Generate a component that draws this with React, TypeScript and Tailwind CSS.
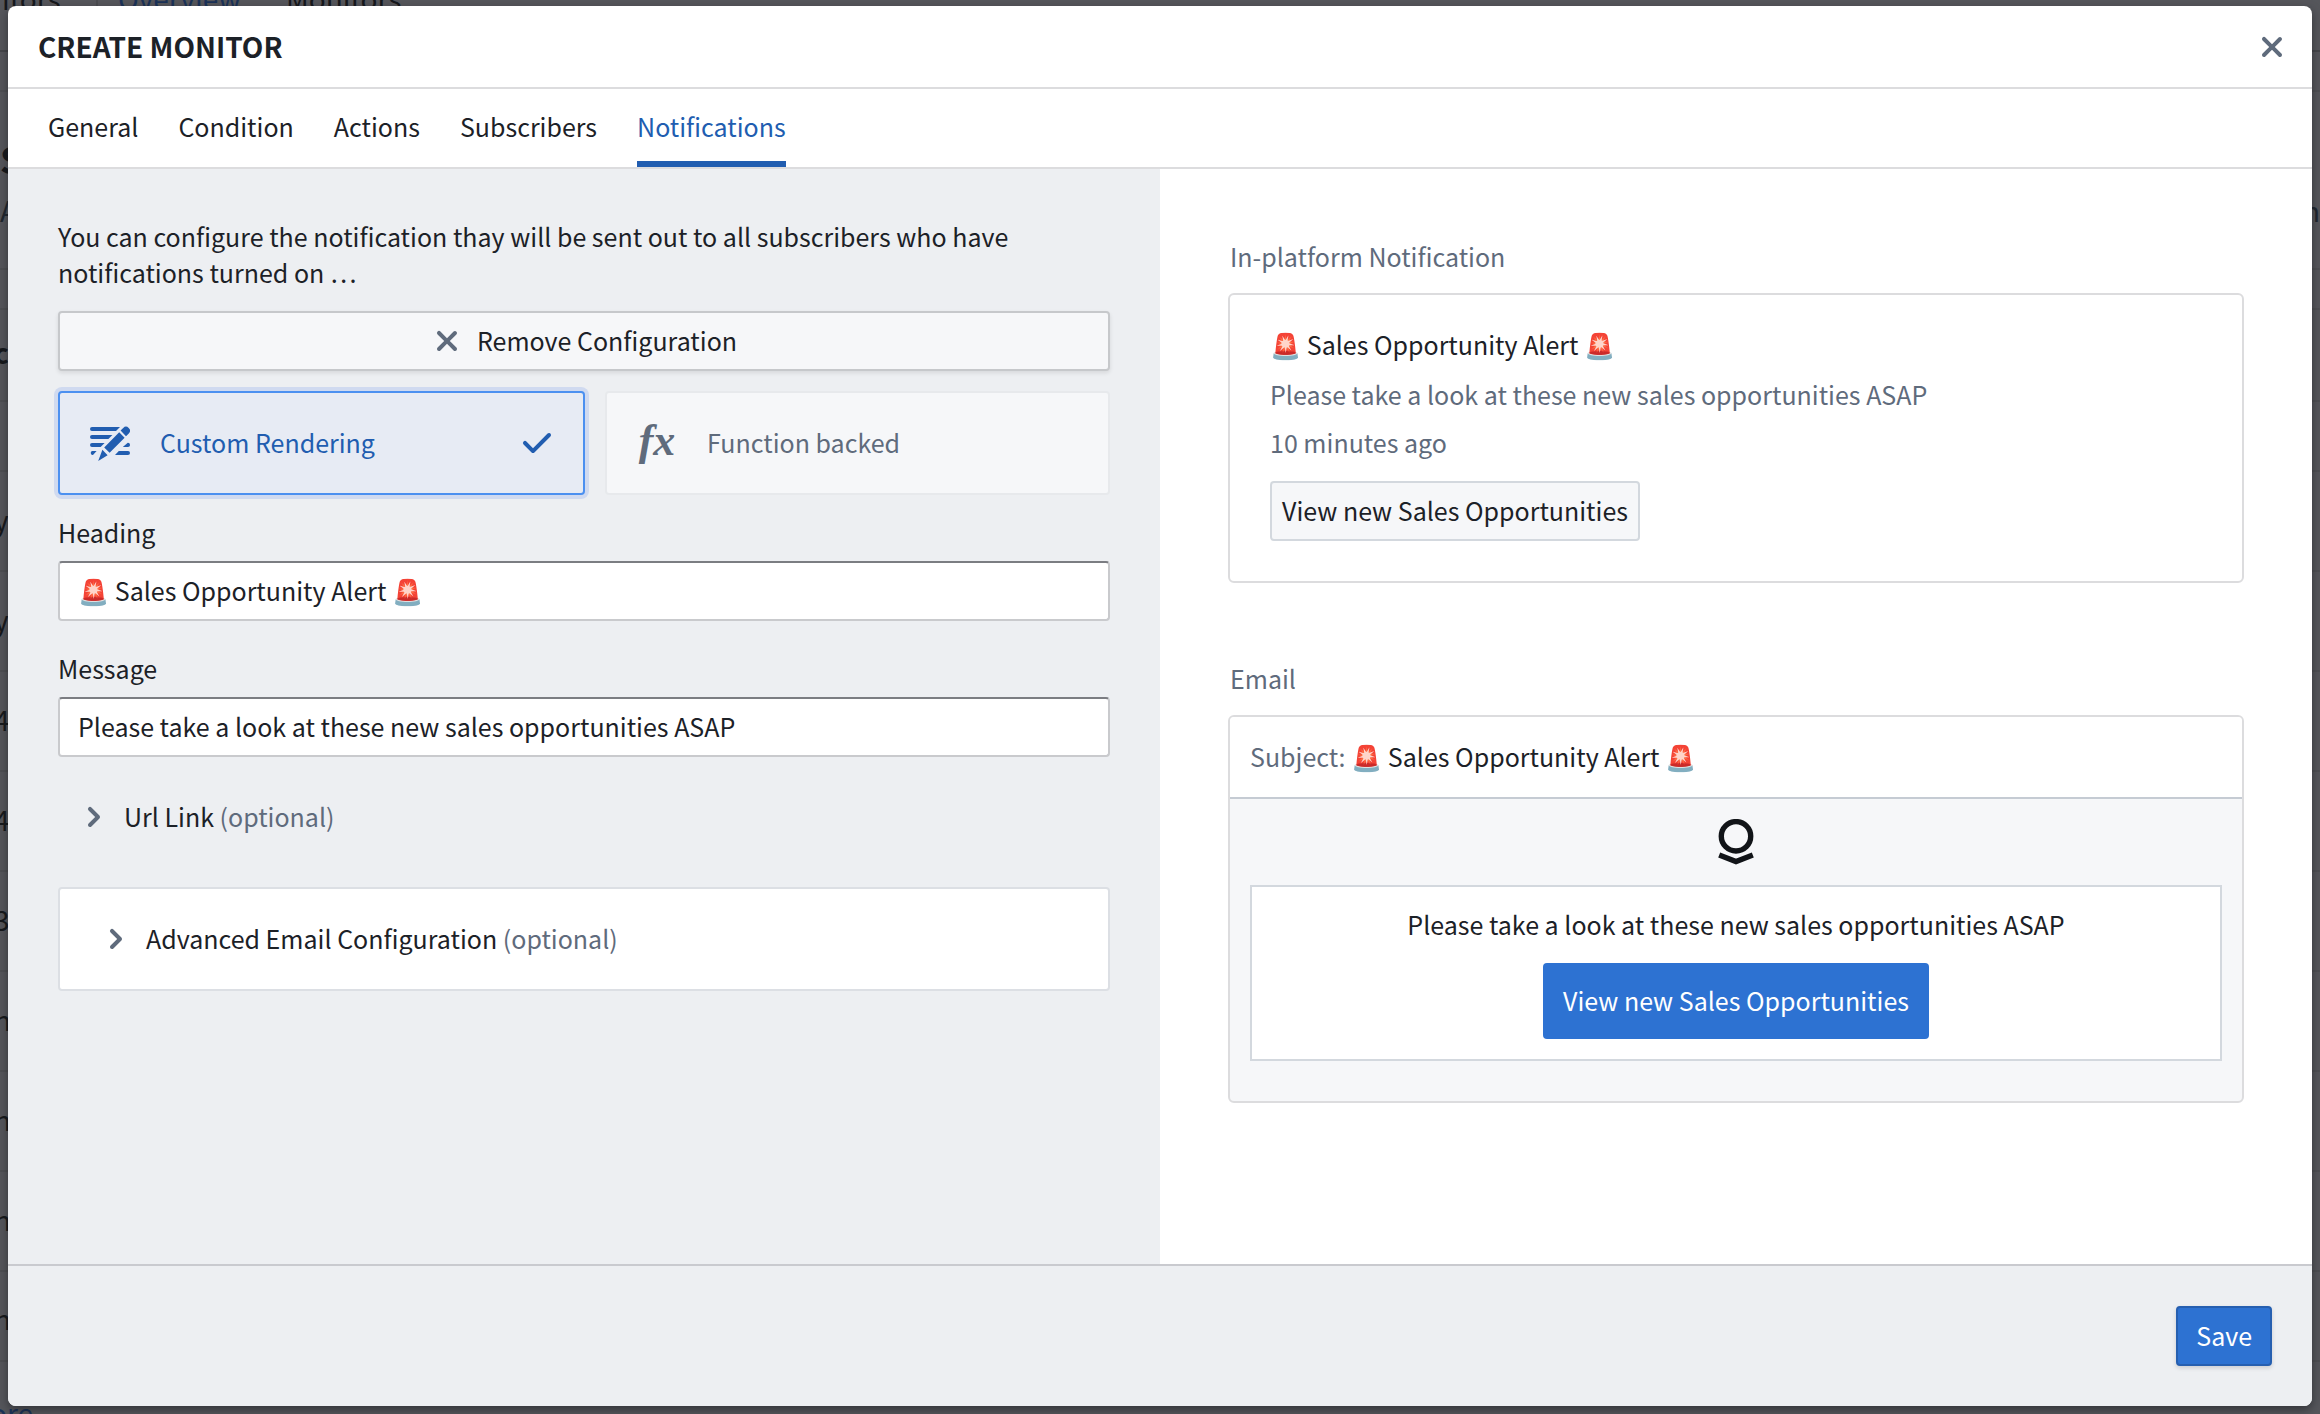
import type { ReactNode } from "react";

type IconProps = { d: string; className: string };

const Icon16 = ({ d, className }: IconProps) => (
  <svg viewBox="0 0 16 16" fill="currentColor" aria-hidden="true" className={className}>
    <path d={d} />
  </svg>
);

const CROSS =
  "M9.41 8l3.29-3.29c.19-.18.3-.43.3-.71a1.003 1.003 0 00-1.71-.71L8 6.59l-3.29-3.3a1.003 1.003 0 00-1.42 1.42L6.59 8 3.3 11.29c-.19.18-.3.43-.3.71a1.003 1.003 0 001.71.71L8 9.41l3.29 3.29c.18.19.43.3.71.3a1.003 1.003 0 00.71-1.71L9.41 8z";
const TICK =
  "M14 3c-.28 0-.53.11-.71.29L6 10.59l-3.29-3.3a1.003 1.003 0 00-1.42 1.42l4 4c.18.18.43.29.71.29s.53-.11.71-.29l8-8A1.003 1.003 0 0014 3z";
const CHEVRON =
  "M10.71 7.29l-4-4a1.003 1.003 0 00-1.42 1.42L8.59 8 5.3 11.29c-.19.18-.3.43-.3.71a1.003 1.003 0 001.71.71l4-4c.18-.18.29-.43.29-.71 0-.28-.11-.53-.29-.71z";

const EditTextIcon = () => (
  <svg viewBox="0 0 20 20" fill="currentColor" aria-hidden="true" className="size-10 shrink-0">
    <path d="M1 2h14l-2 2H1a1 1 0 010-2zM1 6h10.2l-2 2H1a1 1 0 010-2zM1 10h6.3l-2 2H1a1 1 0 010-2zM1 14h2.3l-1.8 2A1.05 1.05 0 011 14zM16.4 12l2.5-2.1A1.05 1.05 0 0119 12zM14.4 14H19a1 1 0 010 2h-6.5z" />
    <path d="M19.4 5.2a1.9 1.9 0 00-2.8-2.7l-1.3 1.3 2.7 2.8zM14.6 4.6l-7.5 7.6 2.7 2.7 7.5-7.5zM6.2 13.4L4.1 19l4.7-2.9z" />
  </svg>
);

const Logo = () => (
  <svg viewBox="0 0 36 46" fill="none" stroke="#111418" aria-hidden="true" className="h-[46px] w-9">
    <circle cx="18" cy="17.3" r="14.7" strokeWidth="5.4" />
    <path d="M1.2 36L18 42.6 34.8 36" strokeWidth="5.4" />
  </svg>
);

const ALERT = "🚨 Sales Opportunity Alert 🚨";
const MESSAGE = "Please take a look at these new sales opportunities ASAP";
const TABS = ["General", "Condition", "Actions", "Subscribers", "Notifications"];

const Field = ({ id, label, value }: { id: string; label: string; value: string }) => (
  <div className="flex flex-col gap-[11px]">
    <label htmlFor={id}>{label}</label>
    <input
      id={id}
      type="text"
      defaultValue={value}
      className="h-[60px] w-full rounded-[4px] border-2 border-[#c9cacd] border-t-[#7b7d82] bg-white px-[18px] pb-0.5"
    />
  </div>
);

const Expander = ({ children, className }: { children: ReactNode; className: string }) => (
  <button type="button" aria-expanded="false" className={className}>
    <Icon16 d={CHEVRON} className="size-8 shrink-0 text-[#5f6b7c]" />
    <span className="pb-0.5">
      {children} <span className="text-[#5f6b7c]">(optional)</span>
    </span>
  </button>
);

const PAGE_ROWS = ["y", "y", "4", "4", "3", "n", "n", "n"];

const PageBehind = () => (
  <div aria-hidden="true" className="absolute inset-0 overflow-hidden bg-[#55565b] text-[28px] text-[#16181c]">
    <div className="flex h-[52px] items-start border-b-2 border-[#45464a]">
      <div className="-mt-5 flex">
        <span className="w-[98px] border-r-2 border-[#4b4c50] pl-0.5">itors</span>
        <span className="w-[188px] pl-5 text-[#1b3258]">Overview</span>
        <span>Monitors</span>
      </div>
    </div>
    <div className="h-10 border-b-2 border-[#4e4f53]" />
    <div className="flex h-[178px] flex-col justify-between border-b-2 border-[#4e4f53] pt-12 pb-10">
      <span className="text-[36px] font-bold">S</span>
      <div className="flex justify-between text-[#20262e]">
        <span>A</span>
        <span>n</span>
      </div>
    </div>
    <div className="h-10 border-b-2 border-[#4e4f53]" />
    <div className="h-[92px] border-b-2 border-[#4e4f53] pt-6 font-bold">
      <span className="-ml-1.5">c</span>
    </div>
    <div className="h-[70px] border-b-2 border-[#4e4f53]" />
    {PAGE_ROWS.map((letter, i) => (
      <div key={i} className="flex h-[100px] items-center border-b-2 border-[#4e4f53] pb-1">
        <span className="-ml-1.5">{letter}</span>
      </div>
    ))}
    <div className="h-[90px] border-b-2 border-[#4e4f53] pt-7">
      <span className="-ml-1.5">n</span>
    </div>
    <div className="pt-8 text-[#1b3258]">
      <span className="-ml-2.5">ore</span>
    </div>
  </div>
);

export default function App() {
  return (
    <div className="relative flex min-h-screen flex-col px-2 pt-1.5 pb-2 font-['Noto_Sans_CJK_SC','Noto_Color_Emoji',sans-serif] text-[25px] leading-9 text-[#1c2127]">
      <PageBehind />
      <div
        role="dialog"
        aria-labelledby="dialog-title"
        className="relative flex grow flex-col overflow-hidden rounded-[8px] bg-white shadow-[0_4px_10px_rgba(17,20,24,0.5)]"
      >
        <header className="flex h-[83px] items-center justify-between border-b-2 border-[#dcdcde] pr-6 pl-[30px]">
          <h2 id="dialog-title" className="pb-0.5 text-[28px] font-bold">
            CREATE MONITOR
          </h2>
          <button type="button" aria-label="Close" className="text-[#5f6b7c]">
            <Icon16 d={CROSS} className="size-8" />
          </button>
        </header>

        <nav role="tablist" className="flex h-20 gap-10 border-b-2 border-[#dcdcde] px-10">
          {TABS.map((tab) => (
            <button
              key={tab}
              type="button"
              role="tab"
              aria-selected={tab === "Notifications"}
              className="border-b-6 border-transparent pt-0.5 aria-selected:border-[#215db0] aria-selected:text-[#215db0]"
            >
              {tab}
            </button>
          ))}
        </nav>

        <div className="grid grow grid-cols-2">
          <section className="flex flex-col bg-[#edeff2] px-[50px] pt-[49px]">
            <p className="max-w-[1000px]">
              You can configure the notification thay will be sent out to all subscribers who have notifications turned
              on …
            </p>
            <button
              type="button"
              className="mt-[21px] flex h-[60px] items-center justify-center gap-3.5 rounded-[4px] border-2 border-[#c6c8cb] bg-[#f6f7f9] shadow-[0_2px_4px_rgba(17,20,24,0.1)]"
            >
              <Icon16 d={CROSS} className="size-8 text-[#5f6b7c]" />
              <span className="pb-0.5">Remove Configuration</span>
            </button>

            <div className="mt-5 grid grid-cols-[527fr_505fr] gap-5">
              <button
                type="button"
                aria-pressed="true"
                className="flex h-[104px] items-center rounded-[4px] border-2 border-[#4c90f0] bg-[#e7ebf4] px-[30px] text-[#215db0] ring-4 ring-[#d0daf0]"
              >
                <EditTextIcon />
                <span className="ml-[30px] grow pb-0.5 text-left">Custom Rendering</span>
                <Icon16 d={TICK} className="size-8" />
              </button>
              <button
                type="button"
                aria-pressed="false"
                className="flex h-[104px] items-center rounded-[4px] border-2 border-[#e7e9ec] bg-[#f6f7f9] px-[30px] text-[#5f6b7c]"
              >
                <span
                  aria-hidden="true"
                  className="w-10 pb-1 text-center font-['Liberation_Serif',serif] text-[44px] font-bold italic"
                >
                  fx
                </span>
                <span className="ml-[30px] pb-0.5">Function backed</span>
              </button>
            </div>

            <div className="mt-[19px] flex flex-col gap-[29px]">
              <Field id="heading" label="Heading" value={ALERT} />
              <Field id="message" label="Message" value={MESSAGE} />
            </div>

            <Expander className="mt-[41px] flex h-[38px] items-center gap-3.5 px-5 text-left">Url Link</Expander>
            <Expander className="mt-[51px] flex h-[104px] items-center gap-3.5 rounded-[4px] border-2 border-[#dcdfe4] bg-white px-10 text-left">
              Advanced Email Configuration
            </Expander>
          </section>

          <section className="flex flex-col px-[68px] pt-[69px]">
            <h3 className="pl-0.5 text-[#5f6b7c]">In-platform Notification</h3>
            <article className="mt-[19px] flex flex-col items-start rounded-[6px] border-2 border-[#dcdcde] px-10 pt-[31px] pb-10">
              <p>{ALERT}</p>
              <p className="mt-3.5 text-[#5f6b7c]">{MESSAGE}</p>
              <p className="mt-3 text-[#5f6b7c]">10 minutes ago</p>
              <button
                type="button"
                className="mt-[21px] h-[60px] rounded-[4px] border-2 border-[#d3d8de] bg-[#f6f7f9] px-2.5 pb-0.5"
              >
                View new Sales Opportunities
              </button>
            </article>

            <h3 className="mt-[77px] pl-0.5 text-[#5f6b7c]">Email</h3>
            <article className="mt-[19px] overflow-hidden rounded-[6px] border-2 border-[#dcdcde] bg-[#f6f7f9]">
              <div className="flex h-[82px] items-center border-b-2 border-[#c5cbd3] bg-white px-5 pb-0.5">
                <p>
                  <span className="text-[#5f6b7c]">Subject:</span> {ALERT}
                </p>
              </div>
              <div className="flex flex-col items-center px-5 pt-5 pb-10">
                <Logo />
                <div className="mt-5 flex w-full flex-col items-center border-2 border-[#d3d8de] bg-white px-5 pt-[19px] pb-5">
                  <p>{MESSAGE}</p>
                  <button
                    type="button"
                    className="mt-[21px] h-[76px] rounded-[4px] bg-[#2d72d2] px-5 pb-0.5 text-white"
                  >
                    View new Sales Opportunities
                  </button>
                </div>
              </div>
            </article>
          </section>
        </div>

        <footer className="flex h-[142px] items-center justify-end border-t-2 border-[#c9cacf] bg-[#edeff2] px-10">
          <button
            type="button"
            className="h-[60px] rounded-[4px] border-2 border-[#265fb0] bg-[#2d72d2] px-[18px] pb-0.5 text-white shadow-[0_2px_4px_rgba(17,20,24,0.15)]"
          >
            Save
          </button>
        </footer>
      </div>
    </div>
  );
}
